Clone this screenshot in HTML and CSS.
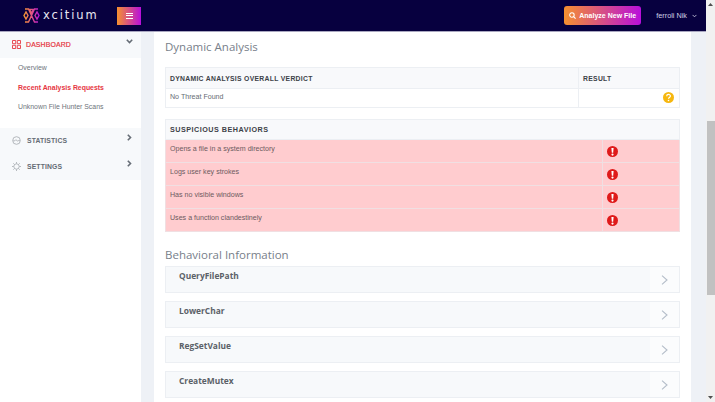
FILE: index.html
```html
<!DOCTYPE html>
<html lang="en">
<head>
<meta charset="utf-8">
<title>Dynamic Analysis</title>
<link rel="stylesheet" href="styles.css">
</head>
<body>
<div class="app">
  <div class="page">
    <header class="topbar">
      <div class="brand">
        <svg class="logo" width="17" height="15" viewBox="0 0 17 15">
          <defs><linearGradient id="lg" x1="0" x2="1" y1="0" y2="0"><stop offset="0" stop-color="#f79a2e"/><stop offset=".55" stop-color="#e0508a"/><stop offset="1" stop-color="#b514d6"/></linearGradient></defs>
          <path d="M2 1h3.5l6 13H15M15 1h-3.5l-6 13H2M1 7.5L3 4l2 3.5L3 11zM12 7.5L14 4l2 3.5L14 11zM8.500 5L6.500 1.500h4z" fill="none" stroke="url(#lg)" stroke-width="1.4"/>
        </svg>
        <span class="brandname">xcitium</span>
      </div>
      <button class="menu-btn" aria-label="Menu"><span></span><span></span><span></span></button>
      <div class="top-right">
        <button class="analyze">
          <svg width="7" height="7" viewBox="0 0 10 10"><circle cx="4.2" cy="4.2" r="3.2" fill="none" stroke="#fff" stroke-width="1.5"/><path d="M6.6 6.6L9.400 9.400" stroke="#fff" stroke-width="1.6"/></svg>
          Analyze New File
        </button>
        <span class="user">ferroli Nik</span>
        <svg class="caret" width="5" height="4" viewBox="0 0 6 4"><path d="M.7.7L3 3l2.3-2.3" fill="none" stroke="#cfd0e4" stroke-width="1"/></svg>
      </div>
    </header>
    <div class="body">
      <aside class="sidebar">
        <div class="nav-head active">
          <svg class="nav-icon" width="9" height="9" viewBox="0 0 9 9"><path d="M.5.500h3.200v3.200H.5zM5.300.500h3.200v3.200H5.300zM.5 5.300h3.200v3.200H.5zM5.300 5.300h3.200v3.200H5.300z" fill="none" stroke="#e6353f" stroke-width=".9"/></svg>
          <span class="nav-label">DASHBOARD</span>
          <svg class="nav-arrow" width="7" height="5" viewBox="0 0 7 5"><path d="M.8.800l2.700 2.700L6.200.800" fill="none" stroke="#666d76" stroke-width="1.6"/></svg>
        </div>
        <ul class="subnav">
          <li>Overview</li>
          <li class="current">Recent Analysis Requests</li>
          <li>Unknown File Hunter Scans</li>
        </ul>
        <div class="nav-group">
          <div class="nav-head">
            <svg class="nav-icon" width="9" height="9" viewBox="0 0 9 9"><circle cx="4.5" cy="4.5" r="3.8" fill="none" stroke="#a5a9ae" stroke-width=".8"/><path d="M1 4.800h2l1-1.200 1.200 1.600L6 4.600h2" fill="none" stroke="#a5a9ae" stroke-width=".7"/></svg>
            <span class="nav-label">STATISTICS</span>
            <svg class="nav-arrow side" width="5" height="7" viewBox="0 0 5 7"><path d="M.8.800l2.700 2.700L.8 6.200" fill="none" stroke="#666d76" stroke-width="1.6"/></svg>
          </div>
          <div class="nav-head">
            <svg class="nav-icon" width="9" height="9" viewBox="0 0 9 9"><circle cx="4.5" cy="4.5" r="2.7" fill="none" stroke="#a5a9ae" stroke-width=".8"/><path d="M4.500 0v1.600M4.500 7.400V9M0 4.500h1.600M7.400 4.500H9M1.300 1.300l1.100 1.100M6.600 6.600l1.100 1.100M1.300 7.700l1.100-1.100M6.600 2.400l1.100-1.100" stroke="#a5a9ae" stroke-width=".8"/></svg>
            <span class="nav-label">SETTINGS</span>
            <svg class="nav-arrow side" width="5" height="7" viewBox="0 0 5 7"><path d="M.8.800l2.700 2.700L.8 6.200" fill="none" stroke="#666d76" stroke-width="1.6"/></svg>
          </div>
        </div>
      </aside>
      <main class="content">
        <h2 class="title first">Dynamic Analysis</h2>
        <table class="grid verdict">
          <colgroup><col class="col-a"><col></colgroup>
          <tr class="head"><th>DYNAMIC ANALYSIS OVERALL VERDICT</th><th>RESULT</th></tr>
          <tr class="plain">
            <td>No Threat Found</td>
            <td class="end">
              <svg width="11" height="11" viewBox="0 0 11 11"><circle cx="5.500" cy="5.500" r="5.500" fill="#f6b70f"/><path d="M3.700 4.200c0-2.300 3.700-2.300 3.700-.1 0 1.400-1.900 1.300-1.900 2.600" fill="none" stroke="#fff" stroke-width="1.200"/><circle cx="5.500" cy="8.500" r=".8" fill="#fff"/></svg>
            </td>
          </tr>
        </table>
        <table class="grid behaviors">
          <colgroup><col class="col-b"><col></colgroup>
          <tr class="head"><th colspan="2">SUSPICIOUS BEHAVIORS</th></tr>
          <tr class="bad"><td>Opens a file in a system directory</td><td class="mark"><svg class="bang" viewBox="0 0 11 11"><use href="#bang"/></svg></td></tr>
          <tr class="bad"><td>Logs user key strokes</td><td class="mark"><svg class="bang" viewBox="0 0 11 11"><use href="#bang"/></svg></td></tr>
          <tr class="bad"><td>Has no visible windows</td><td class="mark"><svg class="bang" viewBox="0 0 11 11"><use href="#bang"/></svg></td></tr>
          <tr class="bad"><td>Uses a function clandestinely</td><td class="mark"><svg class="bang" viewBox="0 0 11 11"><use href="#bang"/></svg></td></tr>
        </table>
        <h2 class="title second">Behavioral Information</h2>
        <div class="acc"><span class="acc-name">QueryFilePath</span><span class="acc-arrow"><svg width="7" height="10" viewBox="0 0 7 10"><path d="M1 .7l5 4.300-5 4.300" fill="none" stroke="#b4bdc9" stroke-width="1.100"/></svg></span></div>
        <div class="acc"><span class="acc-name">LowerChar</span><span class="acc-arrow"><svg width="7" height="10" viewBox="0 0 7 10"><path d="M1 .7l5 4.300-5 4.300" fill="none" stroke="#b4bdc9" stroke-width="1.100"/></svg></span></div>
        <div class="acc"><span class="acc-name">RegSetValue</span><span class="acc-arrow"><svg width="7" height="10" viewBox="0 0 7 10"><path d="M1 .7l5 4.300-5 4.300" fill="none" stroke="#b4bdc9" stroke-width="1.100"/></svg></span></div>
        <div class="acc"><span class="acc-name">CreateMutex</span><span class="acc-arrow"><svg width="7" height="10" viewBox="0 0 7 10"><path d="M1 .7l5 4.300-5 4.300" fill="none" stroke="#b4bdc9" stroke-width="1.100"/></svg></span></div>
      </main>
    </div>
  </div>
  <div class="scrollbar">
    <svg class="sb-arrow" width="5" height="3" viewBox="0 0 5 3"><path d="M2.500 0L5 3H0z" fill="#505050"/></svg>
    <div class="sb-track"><div class="sb-thumb"></div></div>
    <svg class="sb-arrow" width="5" height="3" viewBox="0 0 5 3"><path d="M0 0h5L2.500 3z" fill="#505050"/></svg>
  </div>
</div>
<svg class="defs" width="0" height="0" aria-hidden="true"><symbol id="bang" viewBox="0 0 11 11"><circle cx="5.500" cy="5.500" r="5.500" fill="#df1a1a"/><path d="M4.400 1.900h2.200L6.200 6.800H4.800z" fill="#fff"/><circle cx="5.500" cy="8.600" r="1.100" fill="#fff"/></symbol></svg>
</body>
</html>
```
FILE: styles.css
```css
* { box-sizing: border-box; }
html, body { margin: 0; height: 402px; overflow: hidden; }
body { font-family: "Liberation Sans", Arial, sans-serif; color: #5f666e; background: #eef1f6; }
.defs { position: absolute; }
.app { display: flex; width: 715px; height: 402px; }
.page { width: 706px; display: flex; flex-direction: column; }
.scrollbar { width: 9px; display: flex; flex-direction: column; align-items: center; background: #f1f1f1; padding: 3px 0; }
.sb-track { flex: 1; width: 100%; padding: 115px 0 0 1px; }
.sb-thumb { height: 174px; background: #c1c1c1; }
.topbar { height: 32px; flex: none; display: flex; align-items: center; background: #07003f; padding-left: 23px; padding-right: 9px; border-bottom: 1px solid #a9a7c0; }
.brand { display: flex; align-items: center; width: 94px; }
.logo { flex: none; margin-right: 3px; }
.brandname { font-family: "DejaVu Sans", sans-serif; font-size: 11.5px; letter-spacing: 1.9px; color: #e8e8f2; line-height: 1; }
.menu-btn { width: 24px; height: 18px; border: 0; padding: 0; background: linear-gradient(90deg, #f5902f, #b80fdc); display: flex; flex-direction: column; align-items: center; justify-content: center; gap: 1.5px; }
.menu-btn span { display: block; width: 7px; height: 1px; background: #fff; }
.top-right { margin-left: auto; display: flex; align-items: center; }
.analyze { width: 77px; height: 19px; border: 0; border-radius: 3px; padding: 0; background: linear-gradient(90deg, #f5902f, #b80fdc); color: #fff; font: bold 7px "Liberation Sans", Arial, sans-serif; display: flex; align-items: center; justify-content: center; gap: 3px; white-space: nowrap; }
.user { margin-left: 15px; font-size: 7.3px; color: #cfd0e4; white-space: nowrap; }
.caret { margin-left: 5px; }
.body { flex: 1; display: flex; min-height: 0; }
.sidebar { width: 141px; flex: none; background: #fff; }
.nav-head { height: 26px; display: flex; align-items: center; padding: 0 0 2px 12px; background: #f7f9fb; position: relative; }
.nav-icon { flex: none; margin-right: 6px; }
.nav-label { font-size: 6.8px; font-weight: bold; letter-spacing: .15px; color: #646b73; }
.active .nav-label { color: #e6353f; font-weight: normal; font-size: 6.9px; -webkit-text-stroke: .2px #e6353f; }
.active .nav-icon { margin-right: 5px; }
.nav-arrow { position: absolute; right: 8px; top: 7px; }
.nav-arrow.side { right: 9px; top: 6px; }
.subnav { list-style: none; margin: 0; padding: 0 0 0 18px; height: 70px; }
.subnav li { height: 19.5px; font-size: 6.9px; line-height: 19px; color: #6e747b; white-space: nowrap; }
.subnav li.current { color: #e6353f; font-weight: bold; font-size: 6.9px; }
.nav-group { background: #f7f9fb; }
.content { width: 537px; margin-left: 13px; background: #fff; padding: 0 11px; overflow: hidden; }
.title { margin: 0; font: 400 11.5px/18px "Open Sans", sans-serif; color: #78808a; white-space: nowrap; }
.title.first { padding-top: 6px; height: 35px; }
.title.second { height: 21px; margin-top: 13px; padding-top: 1px; }
.grid { width: 515px; border-collapse: collapse; table-layout: fixed; font-size: 7.1px; }
.col-a { width: 413px; }
.col-b { width: 437px; }
.grid th { text-align: left; font-size: 6.8px; font-weight: bold; letter-spacing: .3px; color: #3c4248; padding: 0 0 0 4px; background: #f8f9fb; border: 1px solid #eceff3; white-space: nowrap; }
.behaviors th { font-size: 7.2px; letter-spacing: .5px; }
.grid td { padding: 0 0 0 4px; border: 1px solid #eceff3; vertical-align: top; }
.verdict { margin-bottom: 11px; }
.verdict .head { height: 21px; }
.verdict .plain { height: 19px; }
.verdict .plain td { padding-top: 4px; color: #666c73; }
.grid .plain .end { text-align: right; padding: 3px 5px 0 0; }
.behaviors .head { height: 20px; }
.bad { height: 23px; background: #ffcccf; }
.grid .bad td { border-color: #f0dfe2; color: #6d5b60; padding-top: 5px; }
.grid .bad .mark { padding: 6px 0 0 4px; border-left-color: #f5dadd; }
.bang { width: 11px; height: 11px; display: block; }
.acc { width: 515px; height: 27px; margin-bottom: 8px; display: flex; background: #f7f9fb; border: 1px solid #eceff3; }
.acc-name { flex: 1; padding: 2px 0 0 13px; font: 700 8.4px/13px "Open Sans", sans-serif; color: #5b6168; }
.acc-arrow { width: 29px; background: #fbfcfd; display: flex; align-items: center; justify-content: center; }
```
